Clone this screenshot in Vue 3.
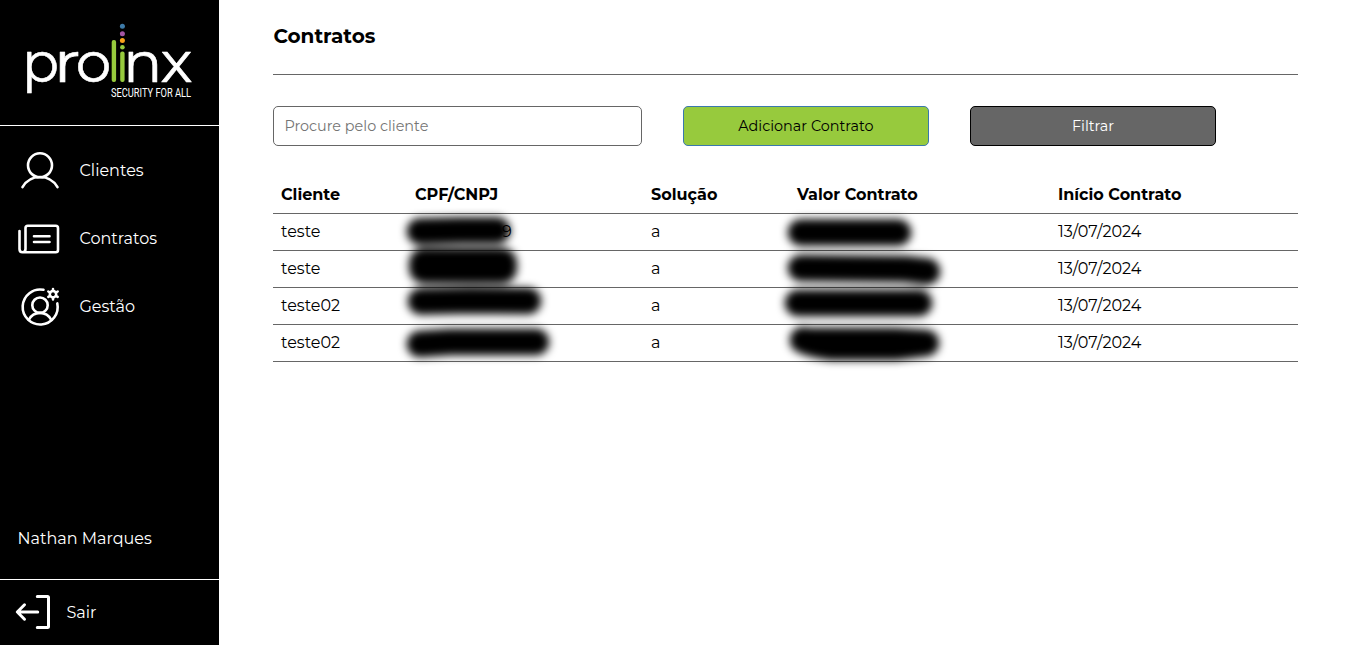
<script setup>
const headers = ['Cliente', 'CPF/CNPJ', 'Solução', 'Valor Contrato', 'Início Contrato']
const contracts = [
  { id: 1, client: 'teste', tail: '9', solution: 'a', start: '13/07/2024' },
  { id: 2, client: 'teste', tail: '', solution: 'a', start: '13/07/2024' },
  { id: 3, client: 'teste02', tail: '', solution: 'a', start: '13/07/2024' },
  { id: 4, client: 'teste02', tail: '', solution: 'a', start: '13/07/2024' },
]
</script>

<template>
  <div class="layout">
    <aside class="sidebar">
      <div class="brand">
        <svg class="logo" width="170" height="80" viewBox="24 23 170 80" role="img" aria-label="prolinx security for all">
          <g class="word">
            <text x="22" y="82" textLength="37" lengthAdjust="spacingAndGlyphs">p</text>
            <text x="53.5" y="82" textLength="27" lengthAdjust="spacingAndGlyphs">r</text>
            <text x="75.800" y="82" textLength="35.500" lengthAdjust="spacingAndGlyphs">o</text>
            <text x="123.300" y="82" textLength="39" lengthAdjust="spacingAndGlyphs">n</text>
            <text x="160.500" y="82" textLength="32" lengthAdjust="spacingAndGlyphs">x</text>
          </g>
          <rect x="111.700" y="40" width="4.400" height="42" rx="2" fill="#97ca3d" />
          <rect x="120.200" y="51.500" width="4.400" height="30.500" rx="2" fill="#97ca3d" />
          <circle cx="122.400" cy="47.300" r="2.300" fill="#97ca3d" />
          <circle cx="122.400" cy="40.500" r="2.500" fill="#f9a11b" />
          <circle cx="122.400" cy="33.800" r="2.500" fill="#a355a3" />
          <circle cx="122.400" cy="26.200" r="2.500" fill="#3d7aa8" />
          <text class="tagline" x="111" y="97" textLength="80" lengthAdjust="spacingAndGlyphs">SECURITY FOR ALL</text>
        </svg>
      </div>

      <nav class="menu">
        <a class="item">
          <svg width="44" height="44" viewBox="18 148 44 44" class="icon">
            <circle cx="40" cy="165.300" r="12" />
            <path d="M22.500 187.200C26 181 32.500 177 40 177S54 181 57.500 187.200" />
          </svg>
          <span>Clientes</span>
        </a>
        <a class="item">
          <svg width="44" height="44" viewBox="18 216 44 44" class="icon">
            <path d="M25.500 249V228Q25.500 225.700 27.800 225.700H55.700Q58 225.700 58 228V250Q58 252.300 55.700 252.300H22.500Q19.500 252.300 19.500 249V231M25.500 249Q25.500 252.300 22.500 252.300M34 236.300H49.500M34 242H49.500" />
          </svg>
          <span>Contratos</span>
        </a>
        <a class="item">
          <svg width="44" height="44" viewBox="18 284 44 44" class="icon">
            <path d="M43.500 289.800A17.500 17.500 0 1 0 57.300 303.400" />
            <circle cx="40" cy="305.200" r="7.700" />
            <path d="M28.700 320C31 315.600 35 312.900 40 312.900S49 315.600 51.300 320" />
            <circle cx="53" cy="294.200" r="3.200" stroke-width="2.500" />
            <path stroke-width="2.500" d="M53 291V289M53 297.400V299.400M50.200 292.600L48.300 291.500M55.800 295.800L57.700 296.900M50.200 295.800L48.300 296.900M55.800 292.600L57.700 291.500" />
          </svg>
          <span>Gestão</span>
        </a>
      </nav>

      <div class="user">Nathan Marques</div>

      <a class="logout">
        <svg width="36" height="36" viewBox="15 594 36 36" class="icon exit">
          <path d="M37.300 596.500H47.500Q48.500 596.500 48.500 597.500V626.500Q48.500 627.500 47.500 627.500H37.300M37.700 612H17.500M24.500 604.800L17.300 612L24.500 619.200" />
        </svg>
        <span>Sair</span>
      </a>
    </aside>

    <main class="content">
      <h1>Contratos</h1>

      <div class="toolbar">
        <input type="text" placeholder="Procure pelo cliente" />
        <button class="add">Adicionar Contrato</button>
        <button class="filter">Filtrar</button>
      </div>

      <div class="table-wrap">
        <table>
          <colgroup>
            <col class="c1" /><col class="c2" /><col class="c3" /><col class="c4" /><col class="c5" />
          </colgroup>
          <thead>
            <tr><th v-for="h in headers" :key="h">{{ h }}</th></tr>
          </thead>
          <tbody>
            <tr v-for="c in contracts" :key="c.id">
              <td>{{ c.client }}</td>
              <td class="document">{{ c.tail }}</td>
              <td>{{ c.solution }}</td>
              <td></td>
              <td>{{ c.start }}</td>
            </tr>
          </tbody>
        </table>
        <svg class="masks" width="1025" height="200" viewBox="273 176 1025 200" aria-hidden="true">
          <path d="M420 231.500L460 230.500L497 230.500" />
          <rect x="409" y="248" width="108" height="35.500" rx="15" />
          <path d="M421 301.500L470 300.500L528 301" />
          <path d="M420 344L450 342L536 342" />
          <path d="M801 232.500H898" />
          <path d="M801 268L850 268.500L905 269L927 271.500" />
          <path d="M798 303H919" />
          <path class="filled" d="M803 340Q810 344 830 347H895L926 343L895 341H810Z" />
        </svg>
      </div>
    </main>
  </div>
</template>

<style>
body { background: #fff; }
</style>

<style scoped>
.layout {
  display: flex;
  height: 645px;
  overflow: hidden;
  font: 400 16px/20px Montserrat, "Open Sans", sans-serif;
  color: #000;
}
.sidebar {
  box-sizing: border-box;
  width: 219px;
  flex: none;
  display: flex;
  flex-direction: column;
  background: #000;
  color: #fff;
}
.brand {
  box-sizing: border-box;
  height: 126px;
  padding: 23px 0 0 24px;
  border-bottom: 1px solid #fff;
}
.logo { display: block; overflow: visible; }
.word {
  font: 400 57px Montserrat, sans-serif;
  fill: #fff;
  stroke: #fff;
  stroke-width: 0.6;
  stroke-linejoin: round;
}
.tagline { font: 400 12px Roboto, sans-serif; fill: #fff; }
.menu {
  display: flex;
  flex-direction: column;
  gap: 24px;
  padding: 22px 0 0 18px;
}
.item { display: flex; align-items: center; gap: 17.500px; }
.item span { padding-top: 2px; }
.icon {
  display: block;
  fill: none;
  stroke: #fff;
  stroke-width: 2.6;
  stroke-linecap: round;
  stroke-linejoin: round;
}
.exit { stroke-width: 3; }
.user { margin-top: auto; padding: 0 0 30px 17.600px; }
.logout {
  box-sizing: border-box;
  display: flex;
  align-items: center;
  gap: 15.500px;
  height: 66px;
  padding: 0 0 1px 15px;
  border-top: 1px solid #fff;
}
.logout span { padding-top: 1px; }
.content { width: 1025px; margin-left: 54px; }
h1 {
  box-sizing: border-box;
  height: 75px;
  margin: 0;
  padding: 24px 0 0 0.400px;
  border-bottom: 1px solid #666;
  font-size: 20px;
  line-height: 24px;
  font-weight: 700;
}
.toolbar { display: flex; gap: 41px; margin-top: 31px; }
input, button {
  box-sizing: border-box;
  height: 40px;
  width: 246px;
  border: 1px solid #666;
  border-radius: 5px;
  font: 400 14.4px Montserrat, "Open Sans", sans-serif;
}
input { width: 369px; padding: 0 10.400px; background: #fff; }
.add { background: #97ca3d; border-color: #3a78ae; color: #000; }
.filter { background: #666; border-color: #000; color: #fff; }
.table-wrap { position: relative; margin-top: 30px; }
table { width: 1025px; table-layout: fixed; border-collapse: collapse; }
.c1 { width: 134px; }
.c2 { width: 236px; }
.c3 { width: 146px; }
.c4 { width: 261px; }
.c5 { width: 248px; }
th, td {
  box-sizing: border-box;
  height: 37px;
  padding: 0 8px;
  border-bottom: 1px solid #666;
  text-align: left;
  vertical-align: middle;
}
th { font-weight: 700; padding-top: 1px; }
.document { padding-left: 95px; }
.masks {
  position: absolute;
  left: 0;
  top: 0;
  filter: blur(4.300px);
  pointer-events: none;
}
.masks path {
  fill: none;
  stroke: #000;
  stroke-width: 26.500;
  stroke-linecap: round;
  stroke-linejoin: round;
}
.masks .filled { fill: #000; }
</style>
